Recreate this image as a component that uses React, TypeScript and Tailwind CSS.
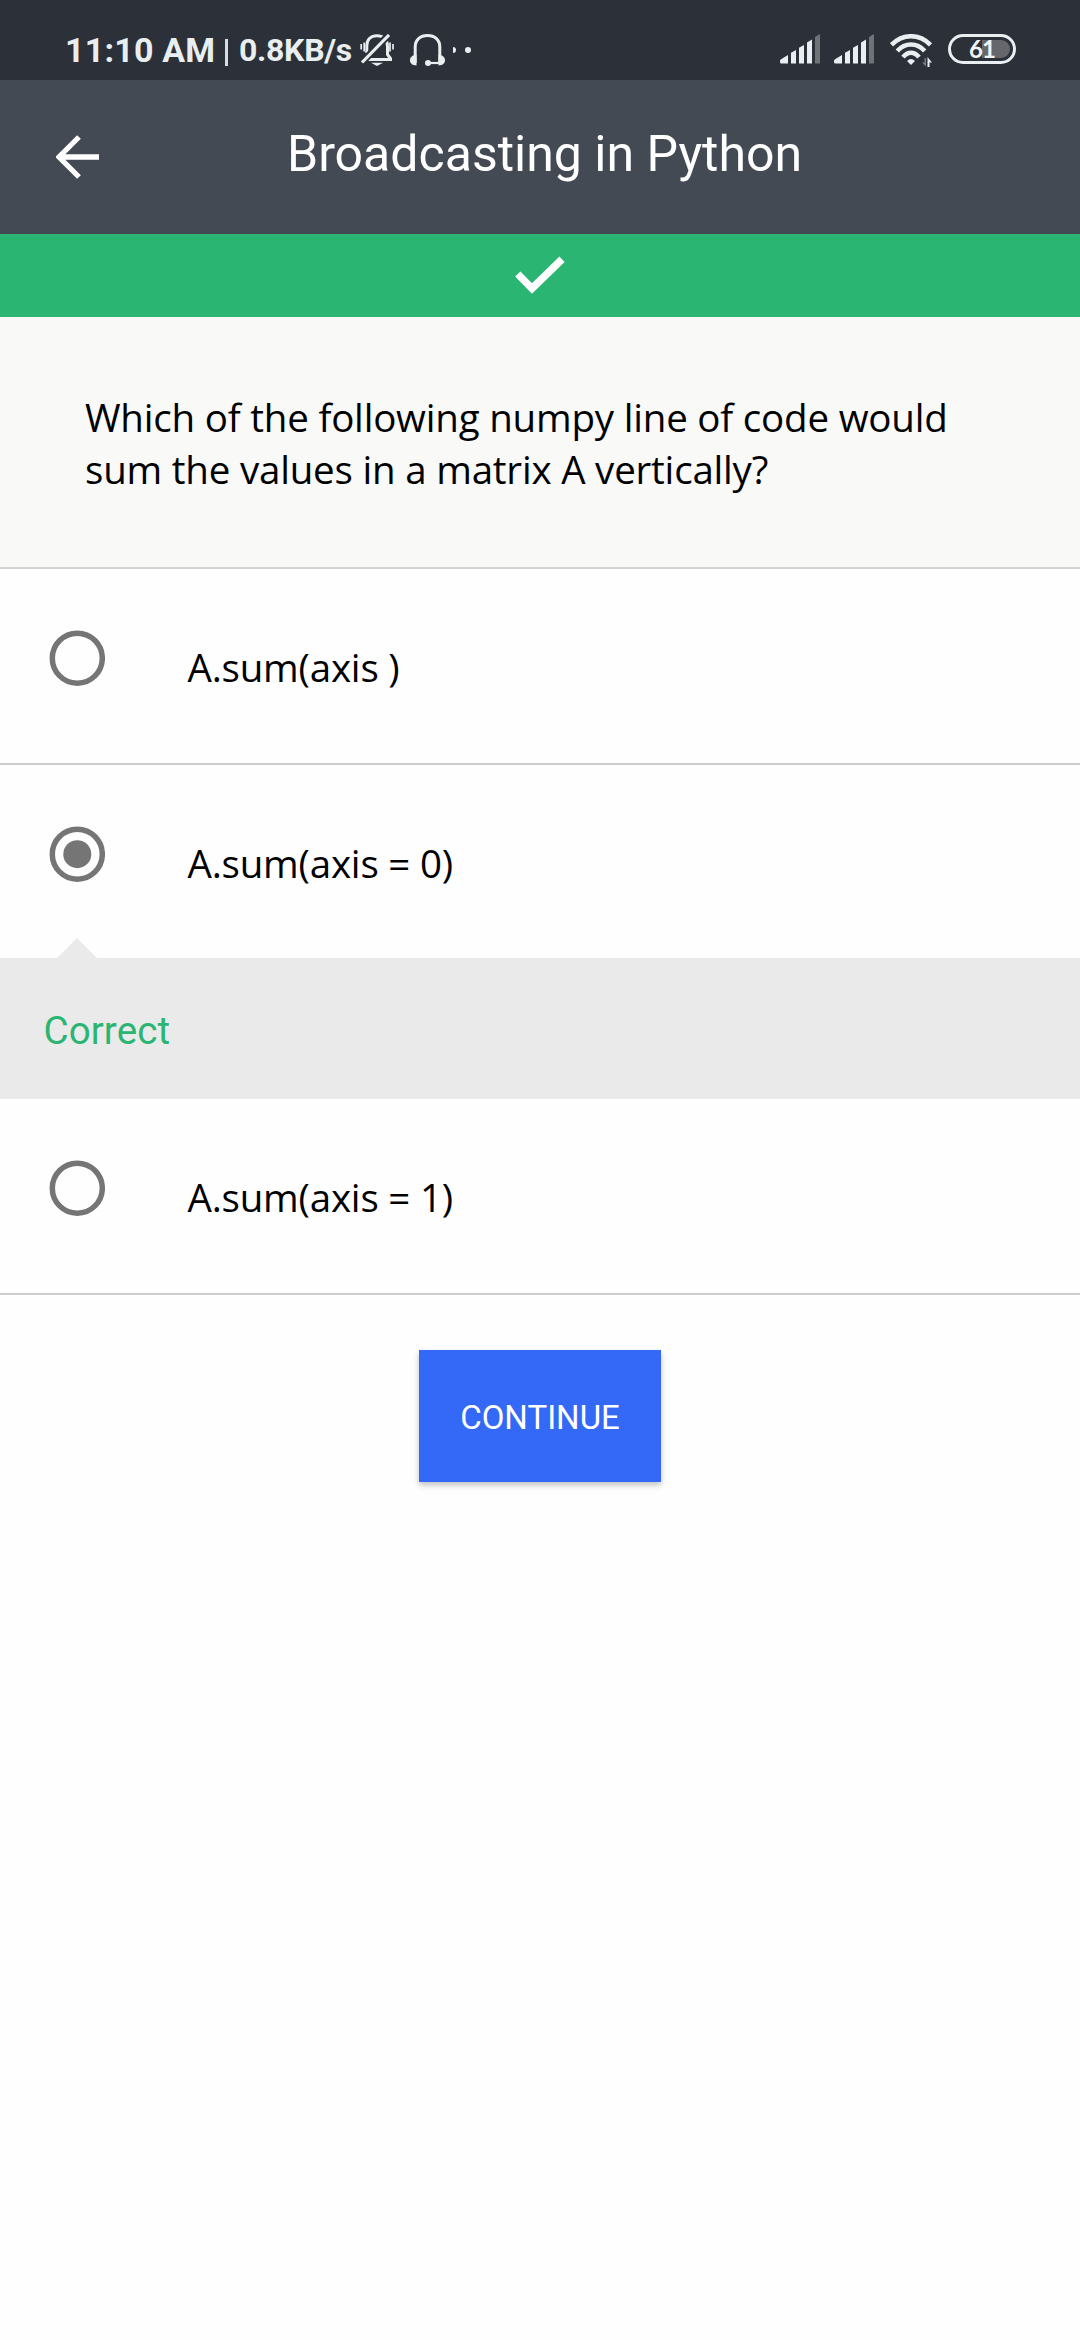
import type { ReactNode } from "react";

function BellOff() {
  return (
    <svg className="h-8 w-[34px]" viewBox="0 0 34 32" fill="none" stroke="#e9eef1">
      <path d="M5 25.5H30.5V24.5L27.5 20.5V12C27.5 5.5 23 1.7 17 1.7C11 1.7 6.8 5.5 6.8 12V19" strokeWidth="3" />
      <path d="M1.5 28.8L28.5 1.2" stroke="#2c3038" strokeWidth="7" />
      <path d="M2 28.5L29 1" strokeWidth="3.2" />
      <path d="M12 25.5H31" strokeWidth="3" />
      <path d="M11 28.8H23L17 32Z" fill="#e9eef1" stroke="none" />
      <path d="M1.2 10V15.5M4.2 8.5V17.5M30 8.5V17.5M33 10V15.5" strokeWidth="1.7" />
    </svg>
  );
}

function Headset() {
  return (
    <svg className="h-8 w-[35px]" viewBox="0 0 35 32" fill="none" stroke="#e9eef1" strokeWidth="3">
      <path d="M5.2 29V13C5.2 6 10 1.6 17.5 1.6C25 1.6 29.8 6 29.8 13V29" />
      <path d="M29 29H18" strokeWidth="2.2" />
      <circle cx="18" cy="29" r="3" fill="#e9eef1" stroke="none" />
      <path d="M6.5 21V31.5C2.5 31.5 0 29.5 0 26.3C0 23 2.5 21 6.5 21ZM28.5 21V31.5C32.5 31.5 35 29.5 35 26.3C35 23 32.5 21 28.5 21Z" fill="#e9eef1" stroke="none" />
    </svg>
  );
}

function Signal() {
  return (
    <svg className="h-[30px] w-10" viewBox="0 0 40 30" fill="#e9eef1">
      <path d="M0 27Q0 25.8 1 25.3L8 21V29.5H1.5Q0 29.5 0 28Z" />
      <path d="M11 18.8L16 16V29.5H11ZM19 13.8L24 11V29.5H19ZM27 8.5L32 5.5V29.5H27Z" />
      <path d="M35 3L40 0V29.5H35Z" fill="#6f7277" />
    </svg>
  );
}

function Wifi() {
  return (
    <svg className="h-[34px] w-[43px]" viewBox="0 0 43 34" fill="none" stroke="#e9eef1" strokeWidth="4.5">
      <path d="M1.5 10.8Q10 2.2 21 2.2Q32 2.2 40.5 10.8" />
      <path d="M7.3 17Q13 10.5 21 10.5Q29 10.5 34.7 17" />
      <path d="M13 23.2Q16.5 18.7 21 18.7Q25.5 18.7 29 23.2" />
      <path d="M17 27Q21 22.8 25 27L21 31Z" fill="#e9eef1" stroke="none" />
      <path d="M36 24V32.5L32 28.5H34.5V24Z" fill="#777b80" stroke="none" />
      <path d="M37.5 33V23L42 28.5H39.5V33Z" fill="#e9eef1" stroke="none" />
    </svg>
  );
}

function Battery() {
  return (
    <div className="flex h-[30px] w-[68px] items-center rounded-full border-3 border-[#e9eef1] p-[3px]">
      <div className="flex h-[18px] w-full items-center justify-center rounded-full bg-linear-to-r from-transparent from-50% to-[#65676c] to-50% font-['Lato'] text-[24px] leading-none font-bold tracking-[-1px] text-[#f1f4f5]">
        61
      </div>
    </div>
  );
}

function StatusBar() {
  return (
    <header className="flex h-20 items-start bg-[#2c3038] pt-[34px] font-['Roboto'] font-bold text-[#e9eef1]">
      <span className="-mt-[4px] ml-[65px] w-[160px] text-[34px] leading-[40px] tracking-[0.2px] whitespace-nowrap">11:10 AM</span>
      <span className="mt-[5px] h-[27px] w-[3px] bg-[#d8dde0]" />
      <span className="-mt-[3px] ml-[11px] w-[121px] text-[32px] leading-[38px] tracking-[-0.3px] whitespace-nowrap">0.8KB/s</span>
      <BellOff />
      <div className="ml-4 flex items-center">
        <Headset />
        <span className="ml-2 h-[6px] w-[3px] rounded-r-full bg-[#e9eef1]" />
        <span className="ml-[9px] size-[6px] rounded-full bg-[#e9eef1]" />
      </div>
      <div className="mr-16 ml-auto flex items-start">
        <Signal />
        <div className="ml-[14px] flex"><Signal /></div>
        <div className="ml-4 flex"><Wifi /></div>
        <div className="ml-[15px] flex"><Battery /></div>
      </div>
    </header>
  );
}

function Option({ children, checked = false }: { children: ReactNode; checked?: boolean }) {
  return (
    <label className={checked ? "relative flex h-[193px] items-start" : "relative flex h-[196px] items-start border-b-2 border-[#cccccc]"}>
      <svg className="mt-[61px] ml-[49px] size-14" viewBox="0 0 56 56" fill="none">
        <circle cx="28.3" cy="28.2" r="25" stroke="#757575" strokeWidth="5.5" />
        {checked && <circle cx="28.3" cy="28.2" r="14" fill="#757575" />}
      </svg>
      <span className="mt-[72px] ml-[82.5px] font-['Open_Sans'] text-[38.5px] leading-[53px] tracking-[-0.2px] whitespace-pre text-black">{children}</span>
      {checked && (
        <svg className="absolute bottom-0 left-[57px] h-5 w-10" viewBox="0 0 40 20">
          <path d="M0 20L20 0L40 20Z" fill="#eaeaea" />
        </svg>
      )}
    </label>
  );
}

export default function App() {
  return (
    <div className="flex h-[2340px] w-[1080px] flex-col overflow-hidden bg-[#fefefe]">
      <StatusBar />
      <nav className="flex h-[154px] items-start bg-[#444a53] text-white">
        <svg className="mt-[55px] ml-[56px] h-[44px] w-[43px]" viewBox="0 0 43 44" fill="none" stroke="white" strokeWidth="5.3">
          <path d="M23 2L3 22L23 42M3 22H43" />
        </svg>
        <h1 className="mt-[45px] ml-[188px] font-['Roboto'] text-[50px] leading-[58px] font-normal whitespace-nowrap">Broadcasting in Python</h1>
      </nav>
      <div className="flex h-[83px] justify-center bg-[#2bb573]">
        <svg className="mt-[22px] h-[39px] w-[50px]" viewBox="0 0 50 39" fill="none" stroke="white" strokeWidth="7.5">
          <path d="M2.8 18L17 32.5L47 3.3" />
        </svg>
      </div>
      <section className="h-[252px] border-b-2 border-[#d3d5d5] bg-[#f9f9f8] pt-[74px] pl-[85px]">
        <p className="font-['Open_Sans'] text-[38.5px] leading-[52px] tracking-[-0.2px] whitespace-nowrap text-black">
          Which of the following numpy line of code would
          <br />
          sum the values in a matrix A vertically?
        </p>
      </section>
      <Option>A.sum(axis )</Option>
      <Option checked>A.sum(axis = 0)</Option>
      <div className="flex h-[141px] items-start bg-[#eaeaea] pt-[50px] pl-[43.5px]">
        <p className="font-['Roboto'] text-[38.5px] leading-[46px] tracking-[0.1px] text-[#2bb573]">Correct</p>
      </div>
      <Option>A.sum(axis = 1)</Option>
      <button className="mt-[55px] flex h-[132px] w-[242px] items-center justify-center self-center bg-[#3369f6] pt-[4px] font-['Roboto'] text-[33px] text-white shadow-[0_3px_6px_rgba(0,0,0,0.25)]">
        CONTINUE
      </button>
    </div>
  );
}
